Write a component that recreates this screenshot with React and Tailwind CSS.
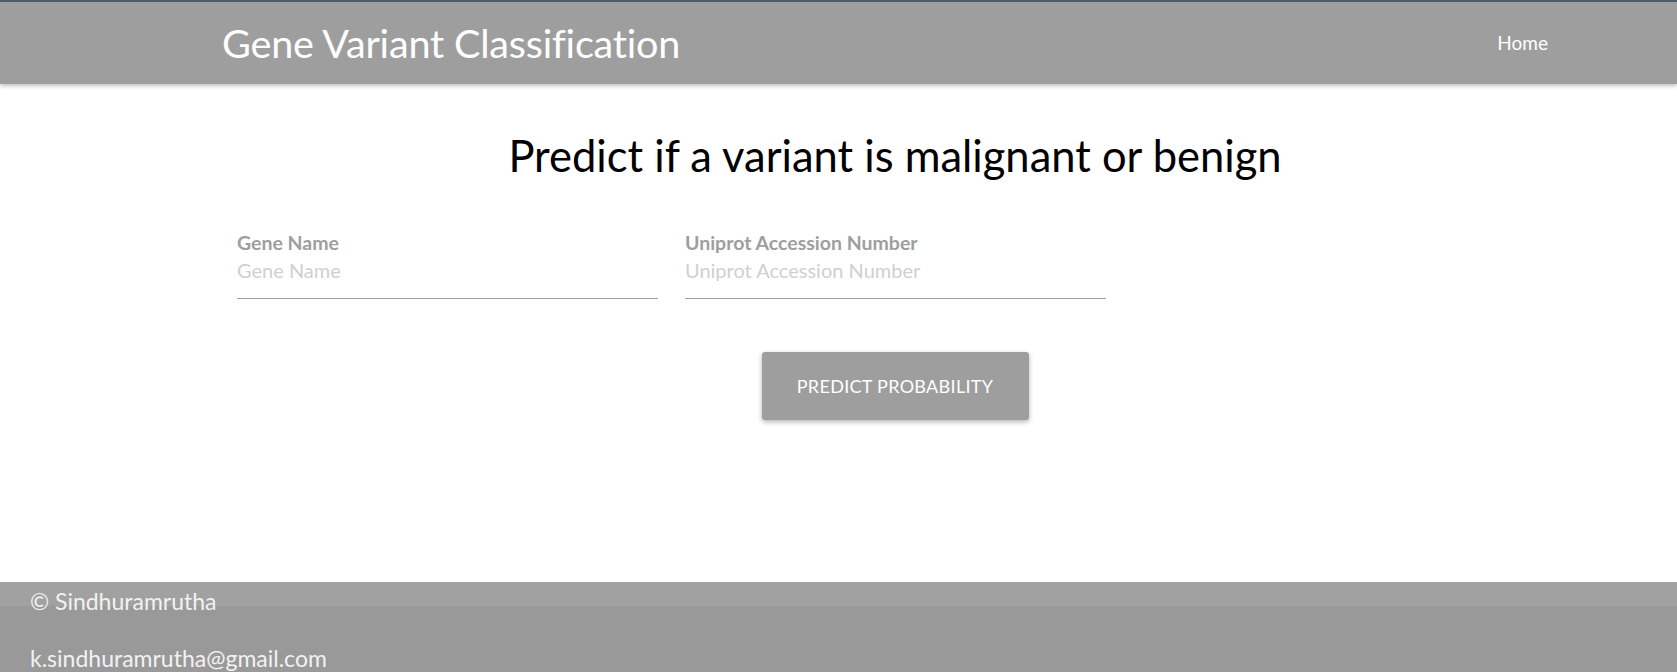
export default function App() {
  const font = { fontFamily: '"Lato", "Open Sans", sans-serif' };
  return (
    <div className="w-full bg-white" style={font}>
      <header className="border-t-[2px] border-[#4b5d68] bg-[#9e9e9e] h-[84px] shadow-[0_2px_4px_rgba(0,0,0,0.25)] relative z-10">
        <div className="h-[82px] flex items-center justify-between pl-[222px] pr-[114px]">
          <div className="text-white text-[39.6px] leading-none tracking-[-0.2px]">Gene Variant Classification</div>
          <a className="text-white text-[19px] px-[15px]">Home</a>
        </div>
      </header>
      <main className="h-[498px] ml-[222px] mr-[109px] pt-[46px]">
        <h1 className="text-center text-black text-[43.5px] leading-[50px]">Predict if a variant is malignant or benign</h1>
        <div className="flex gap-[27px] pl-[15px] mt-[52px]">
          <div className="w-[421px]">
            <div className="text-[#9e9e9e] font-bold text-[19.5px] leading-[22px]">Gene Name</div>
            <div className="text-[#d0d0d0] text-[20px] leading-[26px] mt-[3px] pb-[15px] border-b border-[#9e9e9e]">Gene Name</div>
          </div>
          <div className="w-[421px]">
            <div className="text-[#9e9e9e] font-bold text-[19.5px] leading-[22px]">Uniprot Accession Number</div>
            <div className="text-[#d0d0d0] text-[20px] leading-[26px] mt-[3px] pb-[15px] border-b border-[#9e9e9e]">Uniprot Accession Number</div>
          </div>
        </div>
        <div className="flex justify-center mt-[53px]">
          <button className="w-[267px] h-[68px] bg-[#9e9e9e] rounded-[3px] text-white text-[18px] tracking-[0.3px] shadow-[0_2px_5px_rgba(0,0,0,0.3)]">PREDICT PROBABILITY</button>
        </div>
      </main>
      <footer className="h-[90px] bg-[linear-gradient(#a1a1a1_24px,#999999_24px)] text-[#f2f2f2] text-[23px] pl-[30px]">
        <div className="leading-[38px]">© Sindhuramrutha</div>
        <div className="leading-[38px] mt-[19px]">k.sindhuramrutha@gmail.com</div>
      </footer>
    </div>
  );
}
